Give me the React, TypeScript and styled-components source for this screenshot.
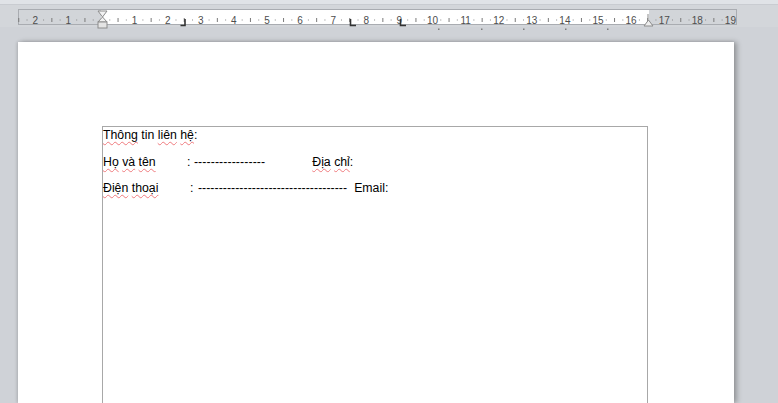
import styled, { createGlobalStyle } from "styled-components";

const GlobalStyle = createGlobalStyle`
  html, body {
    margin: 0;
    padding: 0;
    background: #cfd2d7;
    overflow: hidden;
  }
  #root {
    height: 100vh;
  }
`;

const Shell = styled.div`
  height: 100vh;
  display: flex;
  flex-direction: column;
  background: #cfd2d7;
  font-family: "Liberation Sans", Arial, sans-serif;
`;

const RulerBand = styled.div`
  height: 42px;
  flex: none;
  box-sizing: border-box;
  padding: 5px 0 0 18px;
  background: linear-gradient(
    to bottom,
    #e0e3e7 0,
    #e0e3e7 4px,
    #c9ccd1 4px,
    #c9ccd1 5px,
    #d3d6da 5px,
    #d3d6da 27px,
    #cfd2d7 27px
  );
`;

const Ruler = styled.div`
  position: relative;
  width: 719px;
  height: 22px;
`;

const RulerBar = styled.div`
  margin-top: 4px;
  height: 16px;
  box-sizing: border-box;
  border: 1px solid #a9acb1;
  display: flex;
`;

const RulerPart = styled.div<{ $w: number; $white?: boolean }>`
  width: ${(p) => p.$w}px;
  flex: none;
  background: ${(p) => (p.$white ? "#ffffff" : "#d2d5d9")};
  &:last-child {
    flex: 1;
  }
`;

const Marks = styled.svg`
  position: absolute;
  left: 0;
  top: 0;
  overflow: visible;
`;

const Page = styled.div`
  margin-left: 18px;
  width: 716px;
  flex: 1;
  background: #ffffff;
  box-shadow: 3px 0 5px rgba(0, 0, 0, 0.28), -1px 0 3px rgba(0, 0, 0, 0.15);
  box-sizing: border-box;
  padding: 84px 0 0 84px;
  display: flex;
`;

const TextBox = styled.div`
  width: 546px;
  box-sizing: border-box;
  border: 1px solid #a8a8a8;
  border-bottom: none;
  padding-top: 1px;
  display: flex;
  flex-direction: column;
  gap: 11.5px;
  font-size: 12.3px;
  line-height: 15px;
  color: #000;
`;

const Row = styled.div`
  display: flex;
  white-space: nowrap;
`;

const Label = styled.span<{ $w: number }>`
  width: ${(p) => p.$w}px;
  flex: none;
`;

const Word = styled.span`
  text-decoration: underline wavy #ef7a7d;
  text-decoration-thickness: 1px;
  text-underline-offset: 2px;
  text-decoration-skip-ink: none;
`;

const Dashes = styled.span<{ $gap: number; $ls: number }>`
  margin-left: ${(p) => p.$gap}px;
  letter-spacing: ${(p) => p.$ls}px;
  flex: none;
`;

const Field = styled.span<{ $gap: number }>`
  margin-left: ${(p) => p.$gap}px;
`;

const ZERO = 83.5;
const CM = 33.1;

function RulerMarks() {
  const items = [];
  for (let q = -10; q <= 77; q++) {
    const x = ZERO + (q / 4) * CM;
    if (x < 0 || x > 716) continue;
    const r = ((q % 4) + 4) % 4;
    if (r === 0) {
      if (q === 0) continue;
      items.push(
        <text
          key={q}
          x={x}
          y={15}
          fontSize={10}
          fill="#4d4d4d"
          textAnchor="middle"
          fontFamily="Liberation Sans, Arial, sans-serif"
        >
          {Math.abs(q / 4)}
        </text>
      );
    } else if (r === 2) {
      items.push(
        <line key={q} x1={x} x2={x} y1={9} y2={13} stroke="#7a7a7a" strokeWidth={1} />
      );
    } else {
      items.push(<rect key={q} x={x - 0.5} y={10.5} width={1} height={1} fill="#8a8a8a" />);
    }
  }
  const colDots = [420, 463, 505, 547, 589];
  return (
    <Marks width={719} height={22} viewBox="0 0 719 22">
      {items}
      {/* indent hourglass */}
      <polygon points="80,2 89,2 84.5,8" fill="#f2f2f2" stroke="#8c8c8c" strokeWidth={1} />
      <polygon points="84.5,8 80,13 89,13" fill="#f2f2f2" stroke="#8c8c8c" strokeWidth={1} />
      <rect x={80} y={13} width={9} height={6} fill="#e4e4e4" stroke="#8c8c8c" strokeWidth={1} />
      {/* right tab */}
      <path d="M167 10 V16.5 H162.5" fill="none" stroke="#333" strokeWidth={1.6} />
      {/* left tabs */}
      <path d="M332.5 10 V16.5 H338" fill="none" stroke="#333" strokeWidth={1.6} />
      <path d="M382.5 10 V16.5 H388" fill="none" stroke="#333" strokeWidth={1.6} />
      {/* right margin marker */}
      <line x1={630} x2={630} y1={5} y2={11} stroke="#8c8c8c" strokeWidth={1} />
      <polygon points="630.5,11 626,17 635,17" fill="#eeeeee" stroke="#8c8c8c" strokeWidth={1} />
      {colDots.map((x) => (
        <rect key={x} x={x} y={19.5} width={1.5} height={1.5} fill="#7d7d7d" />
      ))}
    </Marks>
  );
}

export default function App() {
  return (
    <>
      <GlobalStyle />
      <Shell>
        <RulerBand>
          <Ruler>
            <RulerBar>
              <RulerPart $w={82} />
              <RulerPart $w={548} $white />
              <RulerPart $w={87} />
            </RulerBar>
            <RulerMarks />
          </Ruler>
        </RulerBand>
        <Page>
          <TextBox>
            <Row>
              <Word>Thông</Word>&nbsp;tin&nbsp;<Word>liên</Word>&nbsp;<Word>hệ</Word>:
            </Row>
            <Row>
              <Label $w={84}>
                <Word>Họ</Word> <Word>và</Word> <Word>tên</Word>
              </Label>
              <span>:</span>
              <Dashes $gap={3.5} $ls={0.1}>
                {"-".repeat(17)}
              </Dashes>
              <Field $gap={47}>
                <Word>Địa</Word> <Word>chỉ</Word>:
              </Field>
            </Row>
            <Row>
              <Label $w={87}>
                <Word>Điện</Word> <Word>thoại</Word>
              </Label>
              <span>:</span>
              <Dashes $gap={4.5} $ls={0.05}>
                {"-".repeat(36)}
              </Dashes>
              <Field $gap={7}>Email:</Field>
            </Row>
          </TextBox>
        </Page>
      </Shell>
    </>
  );
}
